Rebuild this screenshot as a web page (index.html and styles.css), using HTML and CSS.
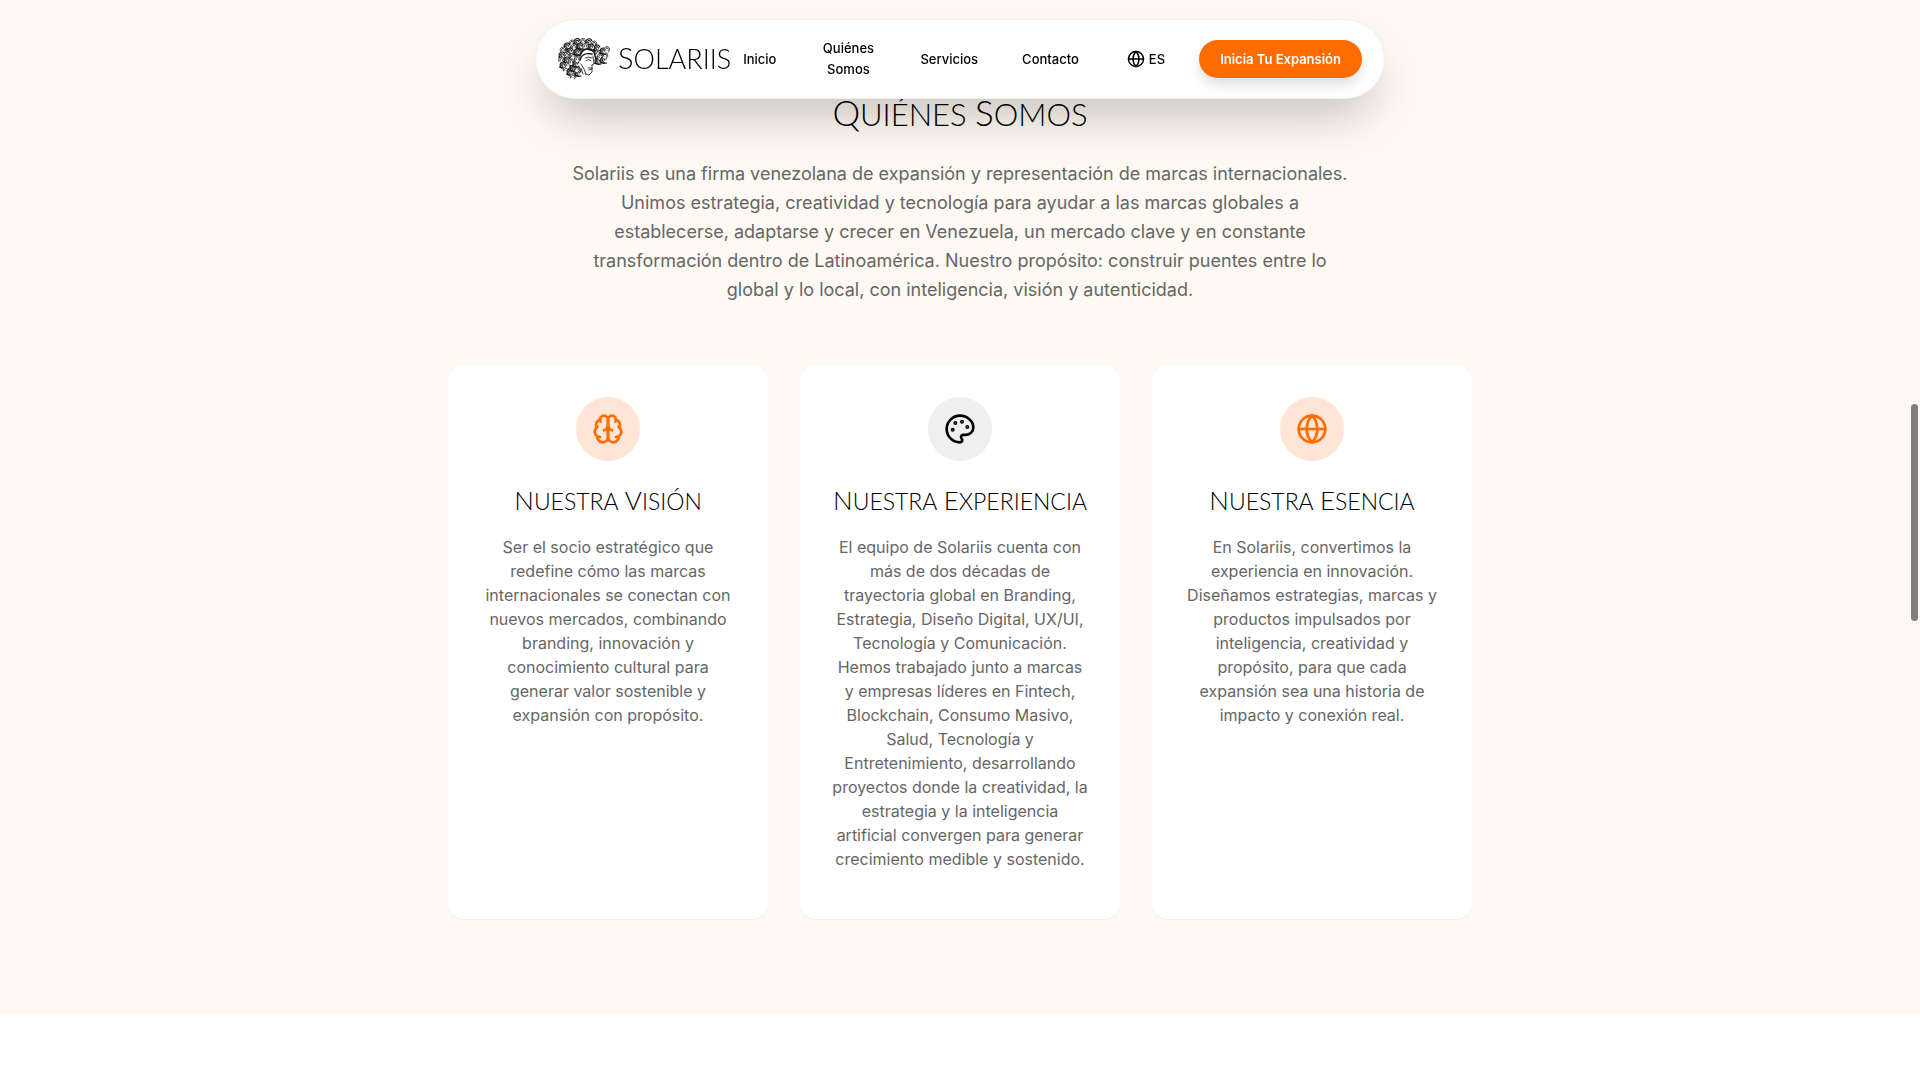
FILE: index.html
```html
<!DOCTYPE html>
<html lang="es">
<head>
<meta charset="utf-8">
<meta name="viewport" content="width=device-width, initial-scale=1">
<title>Solariis</title>
<link rel="stylesheet" href="styles.css">
</head>
<body>
<header class="site-header">
  <nav class="navbar">
    <a class="brand" href="#">
      <svg class="brand-mark" viewBox="0 0 52 42" aria-hidden="true">
        <defs>
          <g id="curl"><circle r="2.900" fill="#fff" stroke="none"/><path d="M-2.500 1.500A2.900 2.900 0 1 1 1.300 2.600M-1.200 .9A1.500 1.500 0 1 1 1.200 .9"/></g>
          <g id="lock"><circle r="2.800" fill="#fff" stroke="none"/><path stroke-width="1.100" d="M2.800-1A2.900 2.900 0 1 0 1 2.700M1.300 .2A1.300 1.300 0 1 0 0 1.300M-3.500 2 Q-1 4 3 3"/></g>
        </defs>
        <g fill="none" stroke="#111" stroke-width=".8" stroke-linecap="round">
          <path fill="#777" stroke="none" d="M13 6Q24 1 35 6L39 14 36 14Q30 8 24 15L20 26 24 33 15 38 8 31 4 24 5 14z"/>
          <path fill="#999" stroke="none" d="M38 18 45 11 50 10 49 19 43 26 38 24z"/>
          <use href="#curl" x="14" y="5"/><use href="#lock" x="19" y="3.500"/><use href="#curl" x="25" y="3.300"/><use href="#lock" x="31" y="3.800"/><use href="#curl" x="36" y="6"/>
          <use href="#lock" x="9" y="8"/><use href="#curl" x="5" y="12"/><use href="#lock" x="4" y="17"/><use href="#curl" x="3.500" y="22"/><use href="#lock" x="5" y="27"/><use href="#curl" x="8" y="31.500"/><use href="#lock" x="12" y="34"/><use href="#curl" x="15" y="38.500"/><use href="#lock" x="20" y="35"/>
          <use href="#lock" x="39" y="10"/><use href="#curl" x="40" y="15"/><use href="#lock" x="33" y="9"/>
          <use href="#curl" x="16" y="9"/><use href="#lock" x="22" y="8"/><use href="#curl" x="27.500" y="8"/><use href="#lock" x="12" y="13"/><use href="#curl" x="9" y="17"/><use href="#lock" x="9" y="22"/><use href="#curl" x="10" y="27"/><use href="#lock" x="15" y="30"/><use href="#curl" x="19" y="31"/><use href="#curl" x="15" y="18"/><use href="#lock" x="19" y="14"/><use href="#curl" x="13.500" y="24"/><use href="#lock" x="18" y="26"/><use href="#curl" x="19.500" y="21"/>
          <use href="#lock" x="40" y="23"/><use href="#curl" x="42.500" y="18.500"/><use href="#lock" x="45.500" y="22"/><use href="#curl" x="47" y="17.500"/><use href="#lock" x="45" y="13"/><use href="#curl" x="49" y="11.500"/>
          <path fill="#fff" stroke="none" d="M25 18 34 15l2 7-1 5-2 7-5 3-5-5-1-7z"/>
          <path stroke-width="1.400" d="M22 17C25 10 31 9 36 14L38 21M22 22Q24 14 34 16"/>
          <path d="M27 20Q30 18 34 20M28 22.500Q31 20.500 33 22.500M35 18 36 26 34 27M30 30 34 30M31 32 34 31M34 27V34L31 37 27 36M23 26 26 31 28 36M23 30 25 36"/>
        </g>
      </svg>
      <span class="brand-name">Solariis</span>
    </a>
    <div class="nav-links">
      <a href="#inicio">Inicio</a>
      <a class="active" href="#quienes-somos">Quiénes Somos</a>
      <a href="#servicios">Servicios</a>
      <a href="#contacto">Contacto</a>
      <button class="lang" type="button">
        <svg class="icon-sm" viewBox="0 0 24 24" aria-hidden="true"><circle cx="12" cy="12" r="10"/><path d="M12 2a14.5 14.5 0 0 0 0 20 14.5 14.5 0 0 0 0-20M2 12h20"/></svg>
        ES
      </button>
    </div>
    <button class="cta" type="button">Inicia Tu Expansión</button>
  </nav>
</header>

<main>
  <section class="about" id="quienes-somos">
    <h2 class="title"><span class="word">Quiénes</span> <span class="word">Somos</span></h2>
    <p class="lead">Solariis es una firma venezolana de expansión y representación de marcas internacionales.<br>
      Unimos estrategia, creatividad y tecnología para ayudar a las marcas globales a<br>
      establecerse, adaptarse y crecer en Venezuela, un mercado clave y en constante<br>
      transformación dentro de Latinoamérica. Nuestro propósito: construir puentes entre lo<br>
      global y lo local, con inteligencia, visión y autenticidad.</p>
    <div class="cards">
      <article class="card">
        <div class="badge badge-orange">
          <svg class="icon" viewBox="0 0 24 24" aria-hidden="true"><path d="M12 5a3 3 0 1 0-5.997.125 4 4 0 0 0-2.526 5.77 4 4 0 0 0 .556 6.588A4 4 0 1 0 12 18Z"/><path d="M12 5a3 3 0 1 1 5.997.125 4 4 0 0 1 2.526 5.77 4 4 0 0 1-.556 6.588A4 4 0 1 1 12 18Z"/><path d="M15 13a4.500 4.500 0 0 1-3-4 4.500 4.500 0 0 1-3 4M17.599 6.500a3 3 0 0 0 .399-1.375M6.003 5.125A3 3 0 0 0 6.401 6.500M3.477 10.896a4 4 0 0 1 .585-.396M19.938 10.500a4 4 0 0 1 .585.396M6 18a4 4 0 0 1-1.967-.516M19.967 17.484A4 4 0 0 1 18 18"/></svg>
        </div>
        <h3 class="card-title"><span class="word">Nuestra</span> <span class="word">Visión</span></h3>
        <p class="card-text">Ser el socio estratégico que<br>redefine cómo las marcas<br>internacionales se conectan con<br>nuevos mercados, combinando<br>branding, innovación y<br>conocimiento cultural para<br>generar valor sostenible y<br>expansión con propósito.</p>
      </article>
      <article class="card">
        <div class="badge badge-gray">
          <svg class="icon" viewBox="0 0 24 24" aria-hidden="true"><g fill="currentColor"><circle cx="13.5" cy="6.5" r=".5"/><circle cx="17.5" cy="10.5" r=".5"/><circle cx="8.5" cy="7.5" r=".5"/><circle cx="6.5" cy="12.5" r=".5"/></g><path d="M12 2C6.500 2 2 6.500 2 12s4.500 10 10 10c.926 0 1.648-.746 1.648-1.688 0-.437-.18-.835-.437-1.125-.29-.289-.438-.652-.438-1.125a1.640 1.640 0 0 1 1.668-1.668h1.996c3.051 0 5.555-2.503 5.555-5.554C21.965 6.012 17.461 2 12 2z"/></svg>
        </div>
        <h3 class="card-title"><span class="word">Nuestra</span> <span class="word">Experiencia</span></h3>
        <p class="card-text">El equipo de Solariis cuenta con<br>más de dos décadas de<br>trayectoria global en Branding,<br>Estrategia, Diseño Digital, UX/UI,<br>Tecnología y Comunicación.<br>Hemos trabajado junto a marcas<br>y empresas líderes en Fintech,<br>Blockchain, Consumo Masivo,<br>Salud, Tecnología y<br>Entretenimiento, desarrollando<br>proyectos donde la creatividad, la<br>estrategia y la inteligencia<br>artificial convergen para generar<br>crecimiento medible y sostenido.</p>
      </article>
      <article class="card">
        <div class="badge badge-orange">
          <svg class="icon" viewBox="0 0 24 24" aria-hidden="true"><circle cx="12" cy="12" r="10"/><path d="M12 2a14.5 14.5 0 0 0 0 20 14.5 14.5 0 0 0 0-20M2 12h20"/></svg>
        </div>
        <h3 class="card-title"><span class="word">Nuestra</span> <span class="word">Esencia</span></h3>
        <p class="card-text">En Solariis, convertimos la<br>experiencia en innovación.<br>Diseñamos estrategias, marcas y<br>productos impulsados por<br>inteligencia, creatividad y<br>propósito, para que cada<br>expansión sea una historia de<br>impacto y conexión real.</p>
      </article>
    </div>
  </section>
</main>
<div class="scroll-thumb" aria-hidden="true"></div>
</body>
</html>
```
FILE: styles.css
```css
* { box-sizing: border-box; margin: 0; }

body {
  background: #fff;
  color: #000;
  font-family: Inter, "Liberation Sans", sans-serif;
}

a { color: inherit; text-decoration: none; }

button {
  border: 0;
  padding: 0;
  background: none;
  color: inherit;
  font: inherit;
}

svg { display: block; flex: none; }

.site-header {
  position: fixed;
  top: 19px;
  left: 0;
  right: 0;
  z-index: 2;
  display: flex;
  justify-content: center;
  padding: 0 16px;
}

.navbar {
  display: flex;
  align-items: center;
  width: 100%;
  max-width: 850px;
  min-height: 80px;
  padding: 0 22px;
  border: 1px solid #f1efec;
  border-radius: 40px;
  background: #fefefe;
  box-shadow: 0 25px 50px -12px rgba(0, 0, 0, .25);
  font-size: 13px;
  font-weight: 500;
  line-height: 21px;
}

.brand { display: flex; align-items: center; gap: 8px; }

.brand-mark { width: 52px; height: 42px; }

.brand-name,
.title,
.card-title {
  font-family: Lato, "Liberation Sans", sans-serif;
  font-weight: 300;
  text-transform: uppercase;
}

.word { display: inline-block; }

.brand-name { display: block; font-size: 27px; line-height: 30px; padding-bottom: 2px; }
.brand-name::first-letter { font-size: 29px; }

.nav-links { display: flex; align-items: center; gap: 44px; margin-left: 12px; }

.nav-links .active { width: 56px; text-align: center; }

.lang { display: flex; align-items: center; gap: 4px; margin-left: 4px; }

.icon-sm,
.icon {
  fill: none;
  stroke: currentColor;
  stroke-width: 2;
  stroke-linecap: round;
  stroke-linejoin: round;
}

.icon-sm { width: 18px; height: 18px; }
.icon { width: 32px; height: 32px; }

.cta {
  height: 38px;
  margin-left: auto;
  padding: 0 21px;
  border-radius: 19px;
  background: #ff6b00;
  color: #fff;
  font-weight: 600;
  box-shadow: 0 8px 14px -3px rgba(0, 0, 0, .15);
}

.about {
  padding: 91px 24px 96px;
  background: #fef9f2;
  text-align: center;
}

.title { font-size: 31px; line-height: 42px; }
.title .word::first-letter { font-size: 35px; }

.lead {
  max-width: 800px;
  margin: 24px auto 61px;
  color: #666;
  font-size: 18px;
  line-height: 29px;
}

.cards {
  display: grid;
  grid-template-columns: repeat(3, 1fr);
  gap: 32px;
  max-width: 1024px;
  margin: 0 auto;
}

.card {
  padding: 32px 24px 48px;
  border-radius: 16px;
  background: #fff;
  box-shadow: 0 1px 2px rgba(0, 0, 0, .05);
}

.badge {
  display: flex;
  align-items: center;
  justify-content: center;
  width: 64px;
  height: 64px;
  margin: 0 auto 23px;
  border-radius: 50%;
}

.badge-orange { background: #ffe5d5; color: #ff6b00; }
.badge-gray { background: #efefef; color: #000; }

.card-title { margin-bottom: 18px; font-size: 23px; line-height: 32px; }
.card-title .word::first-letter { font-size: 26px; }

.card-text { color: #666; font-size: 16px; line-height: 24px; }

.scroll-thumb {
  position: fixed;
  top: 404px;
  right: 2px;
  width: 7px;
  height: 217px;
  border-radius: 4px;
  background: #827e7a;
}

@media (max-width: 900px) {
  .cards { grid-template-columns: 1fr; }
  .navbar { flex-wrap: wrap; }
}
```
